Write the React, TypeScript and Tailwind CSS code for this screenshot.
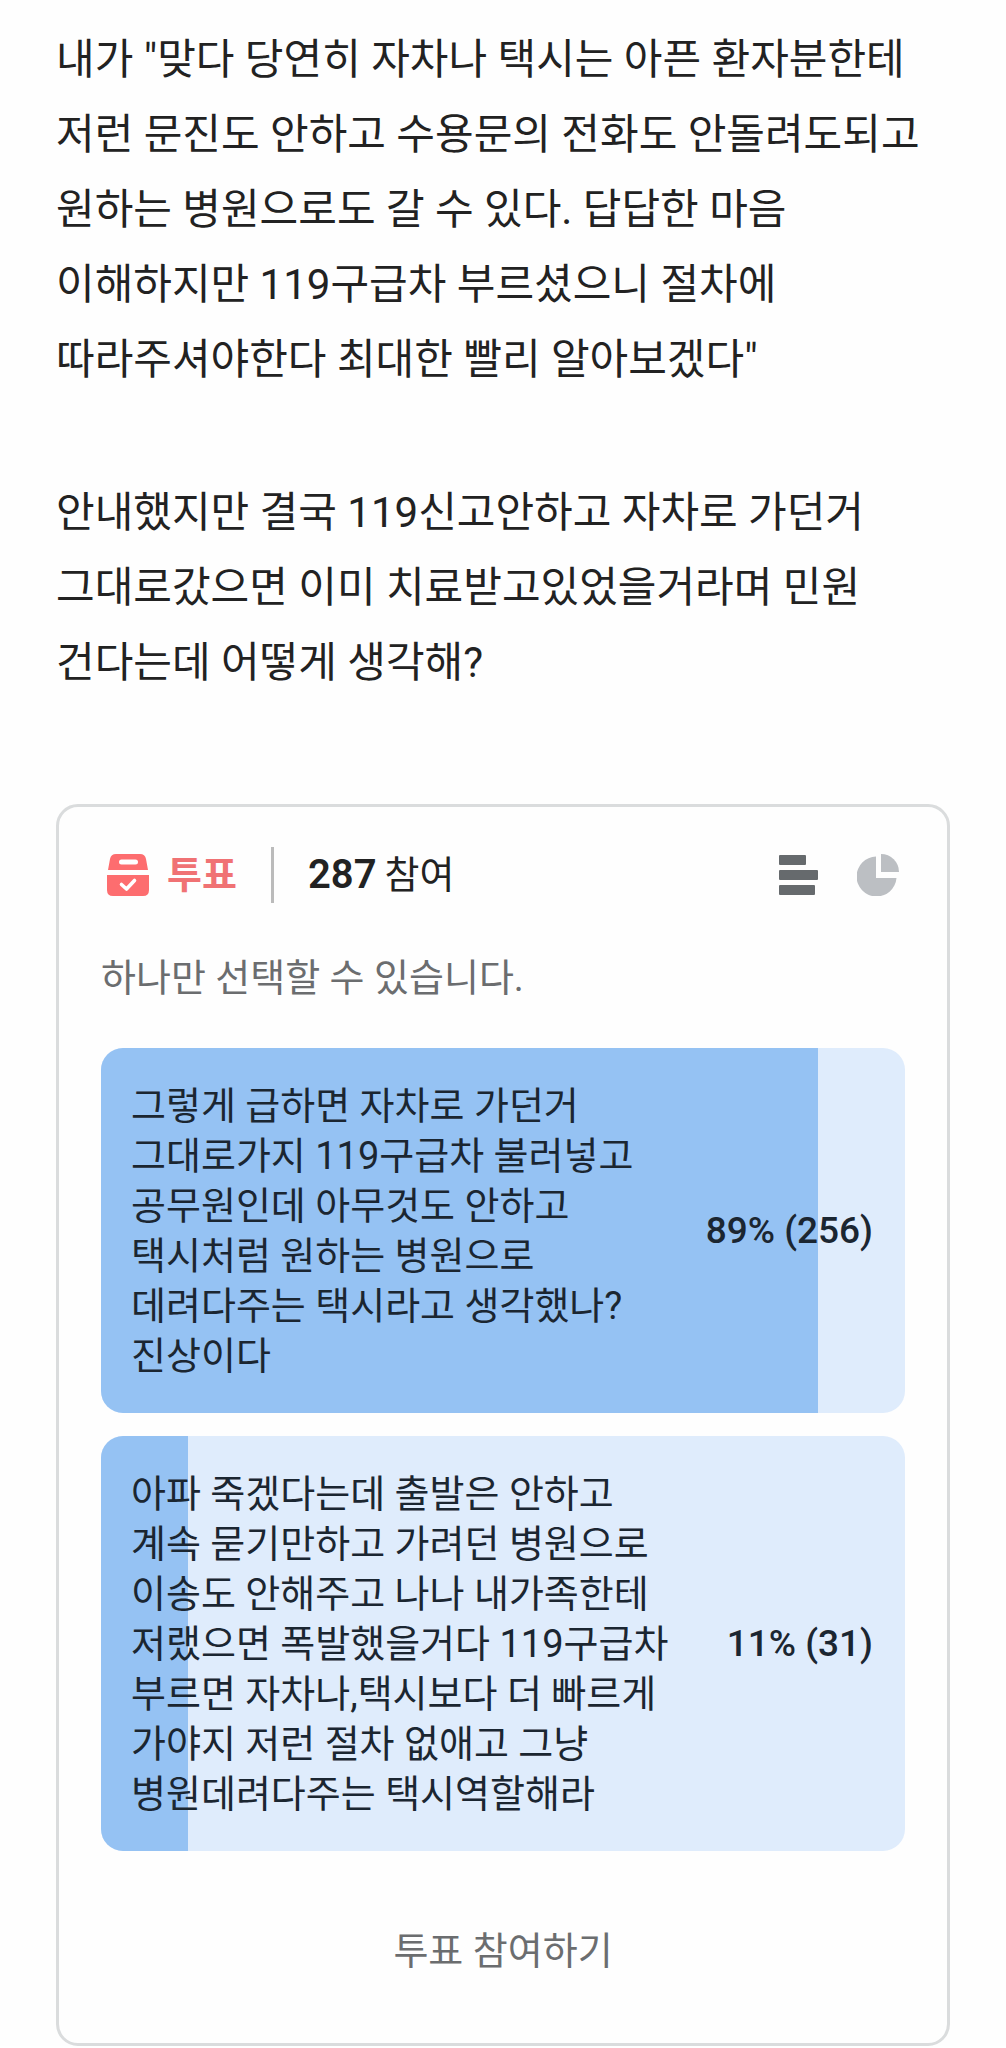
import type { ReactNode } from 'react';

const TOTAL_VOTES = 287;

const OPTIONS = [
  {
    id: 'a',
    votes: 256,
    text: `그렇게 급하면 자차로 가던거
그대로가지 119구급차 불러넣고
공무원인데 아무것도 안하고
택시처럼 원하는 병원으로
데려다주는 택시라고 생각했나?
진상이다`,
  },
  {
    id: 'b',
    votes: 31,
    text: `아파 죽겠다는데 출발은 안하고
계속 묻기만하고 가려던 병원으로
이송도 안해주고 나나 내가족한테
저랬으면 폭발했을거다 119구급차
부르면 자차나,택시보다 더 빠르게
가야지 저런 절차 없애고 그냥
병원데려다주는 택시역할해라`,
  },
];

function BallotIcon() {
  return (
    <svg width="42" height="42" viewBox="0 0 42 42" aria-hidden="true">
      <path
        fill="#fd6d6f"
        fillRule="evenodd"
        d="M9 0H33Q38 0 39 5L41 16H1L3 5Q4 0 9 0ZM14.500 5.500A2.500 2.500 0 0 0 14.500 10.500H28.500A2.500 2.500 0 0 0 28.500 5.500Z"
      />
      <path fill="#fd6d6f" d="M0 21H42V36Q42 42 36 42H6Q0 42 0 36Z" />
      <path d="M14.500 30.500L19.500 35L27.500 26.500" fill="none" stroke="#fff" strokeWidth="3.600" strokeLinecap="round" strokeLinejoin="round" />
    </svg>
  );
}

function BarsIcon() {
  return (
    <svg width="40" height="40" viewBox="0 0 40 40" fill="#666a6d" aria-hidden="true">
      <rect x="0" y="0" width="27" height="10" rx="1" />
      <rect x="0" y="15" width="39" height="10" rx="1" />
      <rect x="0" y="30" width="36" height="10" rx="1" />
    </svg>
  );
}

function PieIcon() {
  return (
    <svg width="42" height="42" viewBox="0 0 42 42" fill="#bcbfc3" aria-hidden="true">
      <path d="M19 2.500V24H39.500A20 20 0 1 1 19 2.500Z" />
      <path d="M24 0A18 18 0 0 1 42 18H24Z" />
    </svg>
  );
}

function IconButton({ label, children }: { label: string; children: ReactNode }) {
  return (
    <button type="button" aria-label={label}>
      {children}
    </button>
  );
}

function PollOption({ text, votes }: { text: string; votes: number }) {
  const ratio = (votes / TOTAL_VOTES) * 100;

  return (
    <li className="relative flex items-center justify-between overflow-hidden rounded-[22px] bg-[#dfecfc] pt-[33px] pr-8 pb-8 pl-[30px]">
      <div className="absolute inset-y-0 left-0 bg-[#95c2f3]" style={{ width: `${ratio}%` }} />
      <p className="relative text-[38px] leading-[50px] whitespace-pre-line text-[#1b2631]">{text}</p>
      <span className="relative shrink-0 text-[37px] leading-[50px] font-medium text-[#1b2631]">
        {Math.round(ratio)}% ({votes})
      </span>
    </li>
  );
}

export default function App() {
  return (
    <main lang="ko" className="bg-[#fefefe] px-14 pt-[22px] font-[Roboto,'Noto_Sans_CJK_KR',sans-serif] text-[#222]">
      <article className="text-[42px] leading-[75px] whitespace-pre-line">
        <p>
          {`내가 "맞다 당연히 자차나 택시는 아픈 환자분한테
저런 문진도 안하고 수용문의 전화도 안돌려도되고
원하는 병원으로도 갈 수 있다. 답답한 마음
이해하지만 119구급차 부르셨으니 절차에
따라주셔야한다 최대한 빨리 알아보겠다"`}
        </p>
        <p className="mt-[78px]">
          {`안내했지만 결국 119신고안하고 자차로 가던거
그대로갔으면 이미 치료받고있었을거라며 민원
건다는데 어떻게 생각해?`}
        </p>
      </article>

      {/* Poll */}
      <section className="mt-[104px] rounded-[22px] border-3 border-[#dadcdd] px-[42px] pt-10 pb-[67px]">
        <header className="flex items-center justify-between px-1.5">
          <div className="flex items-center text-[38px] leading-[56px]">
            <BallotIcon />
            <h2 className="ml-[18px] font-bold text-[#f07274]">투표</h2>
            <div className="mx-[34px] h-14 w-[3px] bg-[#bbb]" />
            <p className="flex items-baseline gap-2">
              <strong className="text-[40px] font-semibold">{TOTAL_VOTES}</strong>
              <span>참여</span>
            </p>
          </div>
          <div className="flex items-center gap-[38px]">
            <IconButton label="막대 그래프로 보기">
              <BarsIcon />
            </IconButton>
            <IconButton label="원 그래프로 보기">
              <PieIcon />
            </IconButton>
          </div>
        </header>

        <p className="mt-[50px] text-[38px] leading-[50px] text-[#6b6d6f]">하나만 선택할 수 있습니다.</p>

        <ul className="mt-[45px] flex flex-col gap-[23px]">
          {OPTIONS.map((option) => (
            <PollOption key={option.id} text={option.text} votes={option.votes} />
          ))}
        </ul>

        <button type="button" className="mt-[75px] w-full text-center text-[38px] leading-[50px] text-[#6b6d6f]">
          투표 참여하기
        </button>
      </section>
    </main>
  );
}
